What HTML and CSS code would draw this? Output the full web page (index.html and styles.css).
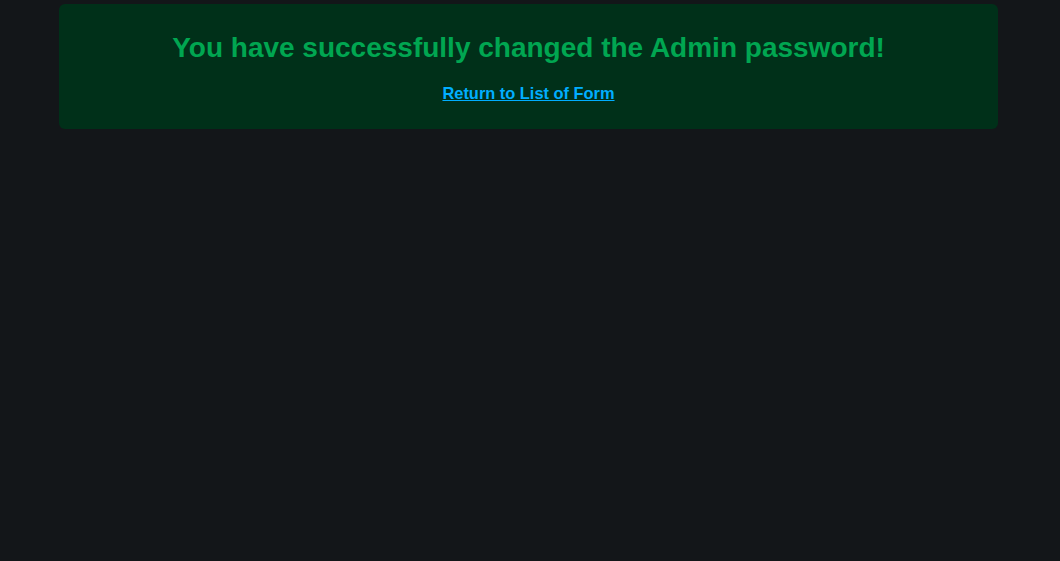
FILE: index.html
```html
<!DOCTYPE html>
<html lang="en">
<head>
<meta charset="utf-8">
<title>Password changed</title>
<link rel="stylesheet" href="styles.css">
</head>
<body>
<div class="page">
  <div class="notice">
    <h1 class="notice-title">You have successfully changed the Admin password!</h1>
    <a class="notice-link" href="#">Return to List of Form</a>
  </div>
</div>
</body>
</html>
```
FILE: styles.css
```css
html, body {
  margin: 0;
  padding: 0;
  background: #131619;
  height: 100%;
}
body {
  font-family: "Liberation Sans", Arial, sans-serif;
}
.page {
  padding: 4px 62px 0 59px;
}
.notice {
  background: #003019;
  border-radius: 6px;
  height: 125px;
  box-sizing: border-box;
  padding-top: 29px;
  display: flex;
  flex-direction: column;
  align-items: center;
}
.notice-title {
  margin: 0;
  color: #00a651;
  font-size: 28px;
  font-weight: bold;
  line-height: 30px;
}
.notice-link {
  margin-top: 21px;
  color: #00aeff;
  font-size: 16.4px;
  font-weight: bold;
  line-height: 18px;
  text-decoration: underline;
}
```
